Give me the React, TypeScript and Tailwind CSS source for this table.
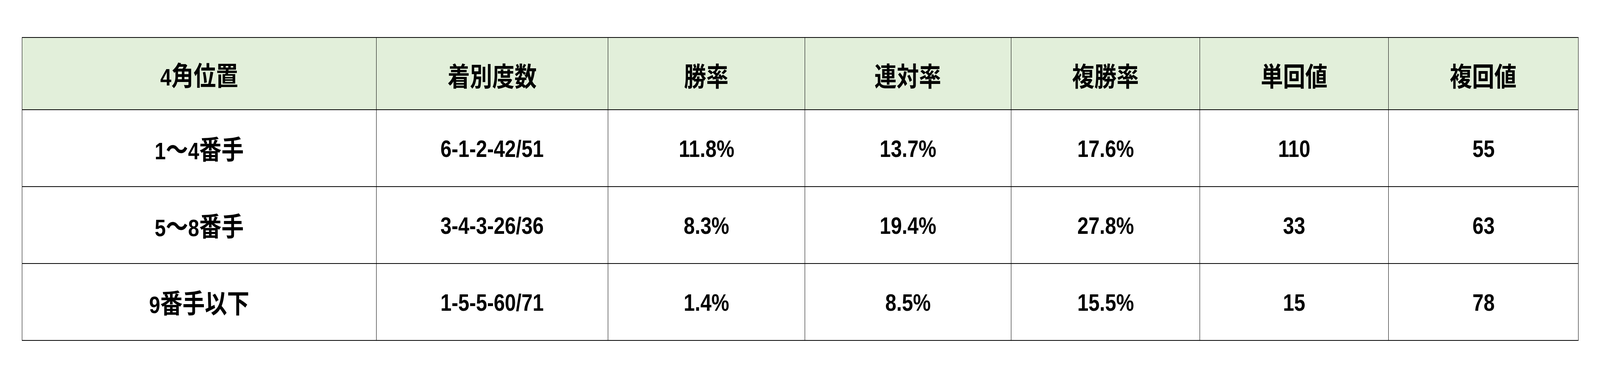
const headers = ["4角位置", "着別度数", "勝率", "連対率", "複勝率", "単回値", "複回値"];

const rows = [
  ["1〜4番手", "6-1-2-42/51", "11.8%", "13.7%", "17.6%", "110", "55"],
  ["5〜8番手", "3-4-3-26/36", "8.3%", "19.4%", "27.8%", "33", "63"],
  ["9番手以下", "1-5-5-60/71", "1.4%", "8.5%", "15.5%", "15", "78"],
];

const widths = ["w-[907px]", "w-[593px]", "w-[504px]", "w-[528px]", "w-[483px]", "w-[483px]", "w-[486px]"];

// japanese runs get the cjk font, digits/latin get the latin font; the whole label is a bit condensed
function CellText({ text }: { text: string }) {
  const parts = text.match(/[\u3000-\u9fff\uff00-\uffef]+|[^\u3000-\u9fff\uff00-\uffef]+/g) ?? [];
  return (
    <span className="inline-block scale-x-[0.838] whitespace-nowrap leading-none">
      {parts.map((p, i) =>
        /[\u3000-\u9fff\uff00-\uffef]/.test(p) ? (
          <span key={i} className="font-['Noto_Sans_CJK_JP',sans-serif] text-[68px] font-bold">
            {p}
          </span>
        ) : (
          <span key={i} className="font-['Liberation_Sans',Arial,sans-serif] text-[61px] font-bold">
            {p}
          </span>
        )
      )}
    </span>
  );
}

export default function App() {
  return (
    <div className="h-screen w-full bg-white pl-[56px] pt-[95px]">
      <table className="table-fixed border-collapse text-black">
        <colgroup>
          {widths.map((w, i) => (
            <col key={i} className={w} />
          ))}
        </colgroup>
        <thead>
          <tr className="h-[185px] bg-[#e2efda]">
            {headers.map((h) => (
              <th key={h} className="border-x border-y-2 border-black p-0 pt-[8px] text-center align-middle">
                <CellText text={h} />
              </th>
            ))}
          </tr>
        </thead>
        <tbody>
          {rows.map((r) => (
            <tr key={r[0]} className="h-[197px]">
              {r.map((c, i) => (
                <td key={i} className="border-x border-y-2 border-black p-0 pt-[4px] text-center align-middle">
                  <CellText text={c} />
                </td>
              ))}
            </tr>
          ))}
        </tbody>
      </table>
    </div>
  );
}
